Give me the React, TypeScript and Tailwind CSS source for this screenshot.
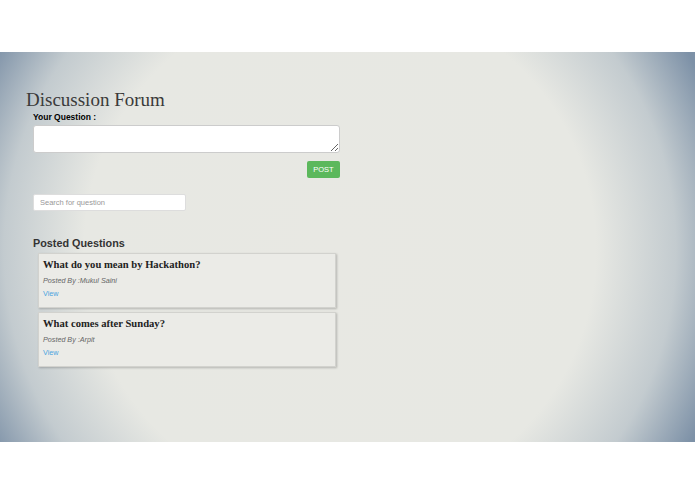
import React from "react";

const questions = [
  { title: "What do you mean by Hackathon?", by: "Mukul Saini" },
  { title: "What comes after Sunday?", by: "Arpit" },
];

export default function App() {
  return (
    <div className="w-[695px] h-[494px] bg-white flex flex-col" style={{ fontFamily: '"Liberation Sans", Arial, sans-serif' }}>
      <div className="h-[52px] shrink-0" />
      <div className="h-[390px] shrink-0 bg-[radial-gradient(circle_400px_at_340px_198px,#e8e8e3_0%,#e7e8e3_64%,#c3cbcf_84%,#7d91a7_100%)] pt-[36px]">
        <h1 className="ml-[26px] text-[19px] leading-[24px] text-[#3a3a3a] font-normal" style={{ fontFamily: '"Liberation Serif", "Times New Roman", serif' }}>
          Discussion Forum
        </h1>
        <div className="ml-[33px] w-[307px]">
          <label className="block text-[8.5px] font-bold text-black leading-[11px]">Your Question :</label>
          <textarea className="block mt-[2px] w-[307px] h-[28px] bg-white border border-[#ccc] rounded-[3px] resize-y" />
          <div className="flex justify-end mt-[8px]">
            <button className="w-[33px] h-[17px] bg-[#5cb85c] text-white text-[7.5px] rounded-[2px] leading-[17px]">POST</button>
          </div>
          <input
            placeholder="Search for question"
            className="block mt-[16px] w-[153px] h-[17px] bg-white border border-[#ddd] rounded-[2px] px-[6px] text-[7.5px] placeholder:text-[#999]"
          />
          <h2 className="mt-[25px] text-[10.8px] font-bold text-[#333] leading-[14px]">Posted Questions</h2>
          <div className="mt-[3px] ml-[5px] w-[298px] flex flex-col gap-[4px]">
            {questions.map((q) => (
              <div key={q.title} className="h-[55px] border border-[#d2d2ce] bg-[#ebebe7] shadow-[1px_1px_2px_rgba(0,0,0,0.22)] px-[4px] pt-[4px]">
                <div className="text-[10.6px] font-bold text-[#222] leading-[14px]" style={{ fontFamily: '"Liberation Serif", "Times New Roman", serif' }}>
                  {q.title}
                </div>
                <div className="mt-[4px] text-[7.2px] italic text-[#666] leading-[10px]">Posted By :{q.by}</div>
                <div className="mt-[3px] text-[7.2px] text-[#4aa3df] leading-[10px]">View</div>
              </div>
            ))}
          </div>
        </div>
      </div>
      <div className="flex-1" />
    </div>
  );
}
